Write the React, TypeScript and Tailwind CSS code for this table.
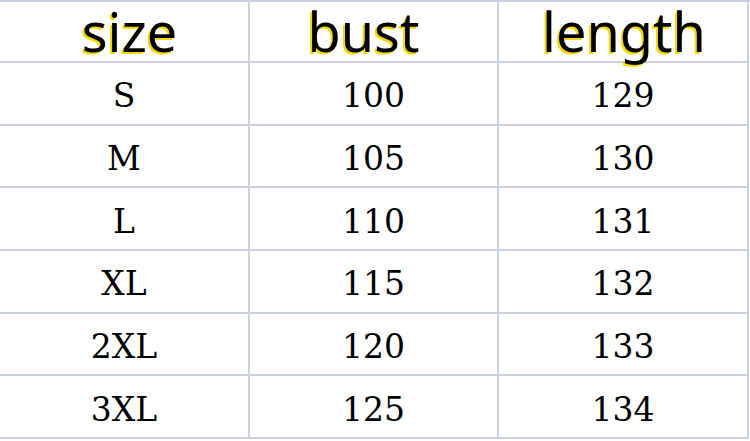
const rows = [
  ['S', '100', '129'],
  ['M', '105', '130'],
  ['L', '110', '131'],
  ['XL', '115', '132'],
  ['2XL', '120', '133'],
  ['3XL', '125', '134'],
];

const headers = [
  { label: 'size', cls: 'pl-[11px]' },
  { label: 'bust', cls: 'pr-[20px]' },
  { label: 'length', cls: 'pl-[2px]' },
];

export default function App() {
  return (
    <div className="w-[750px] h-[441px] bg-white overflow-hidden">
      <div className="grid grid-cols-[250px_249px_250px] border-t-2 border-[#c9d0e1]">
        {headers.map((h) => (
          <div
            key={h.label}
            className={`h-[61px] flex items-start justify-center border-r-2 border-b-2 border-[#c9d0e1] ${h.cls}`}
          >
            <span className="text-[54px] leading-[58px] text-black [font-family:'Noto_Sans',sans-serif] [text-shadow:-2px_2px_0_#f7d900]">
              {h.label}
            </span>
          </div>
        ))}
        {rows.map((r) =>
          r.map((v, i) => (
            <div
              key={r[0] + i}
              className="h-[62.7px] flex items-center justify-center border-r-2 border-b-2 border-[#c9d0e1] pt-[5px]"
            >
              <span className="text-[33px] leading-none text-black [font-family:'DejaVu_Serif',serif]">
                {v}
              </span>
            </div>
          ))
        )}
      </div>
    </div>
  );
}
